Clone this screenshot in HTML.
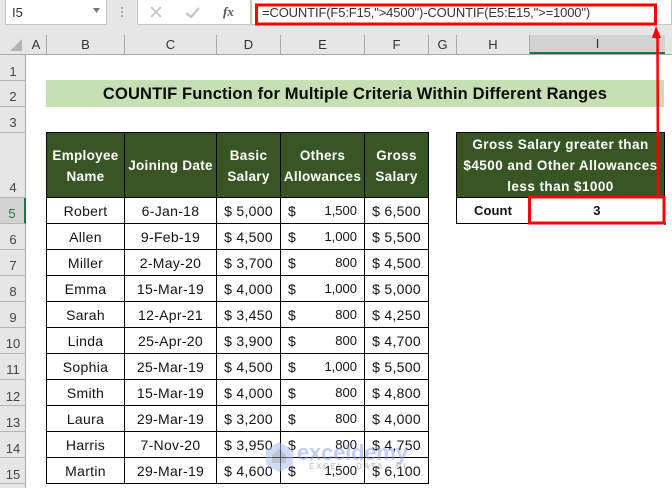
<!DOCTYPE html>
<html><head><meta charset="utf-8"><style>
html,body{margin:0;padding:0}
body{width:672px;height:488px;position:relative;overflow:hidden;background:#fff;font-family:"Liberation Sans",sans-serif;color:#111}
.a{position:absolute;white-space:nowrap}
.ch{position:absolute;top:35px;height:19px;line-height:19px;font-size:13px;text-align:center;color:#333;border-right:1px solid #a9a9a9;box-sizing:border-box}
.rh{position:absolute;left:0;width:26px;box-sizing:border-box;border-bottom:1px solid #b5b5b5;font-size:13px;text-align:center;color:#444;line-height:32px}
table{position:absolute;border-collapse:collapse;table-layout:fixed;font-size:14px;letter-spacing:.3px}
td{border:1px solid #000;padding:0;text-align:center;height:25px;white-space:nowrap;overflow:hidden}
th{border:1px solid #000;background:#375623;color:#fff;font-size:13.500px;line-height:21px;font-weight:bold;padding:1px 0 0;height:63px;letter-spacing:.3px;white-space:nowrap}
.o{position:relative}.o i{font-style:normal;position:absolute;left:7px;top:5px}.o b{font-weight:normal;position:absolute;right:7px;top:5px;font-size:13px;letter-spacing:0}
</style></head><body>
<div class="a" style="left:0;top:0;width:672px;height:54px;background:#e6e6e6"></div>
<div class="a" style="left:0;top:54px;width:26px;height:434px;background:#e6e6e6;border-right:1px solid #a9a9a9;box-sizing:border-box"></div>
<div class="a" style="left:5px;top:-1px;width:102px;height:26px;background:#fff;border:1px solid #c6c6c6;box-sizing:border-box"></div>
<div class="a" style="left:12px;top:5px;font-size:13px;color:#333">I5</div>
<svg class="a" style="left:92px;top:8px" width="10" height="6"><path d="M1 0H8L4.500 5Z" fill="#777"/></svg>
<div class="a" style="left:121px;top:7px;width:2px;height:2px;background:#aaa;box-shadow:0 4px #aaa,0 8px #aaa"></div>
<div class="a" style="left:137px;top:-1px;width:114px;height:26px;background:#fff;border:1px solid #c6c6c6;box-sizing:border-box"></div>
<svg class="a" style="left:148px;top:4px" width="90" height="16"><path d="M3 3L13 13M13 3L3 13" stroke="#c4c4c4" stroke-width="1.800" fill="none"/><path d="M38 9L43 13L51 4" stroke="#c4c4c4" stroke-width="2.200" fill="none"/></svg>
<div class="a" style="left:223px;top:4px;font:italic bold 13px 'Liberation Serif',serif;color:#555">fx</div>
<div class="a" style="left:251px;top:-1px;width:421px;height:26px;background:#fff;border:1px solid #c6c6c6;box-sizing:border-box"></div>
<div class="a" style="left:262px;top:5px;font-size:13px;color:#333;letter-spacing:-.14px">=COUNTIF(F5:F15,"&gt;4500")-COUNTIF(E5:E15,"&gt;=1000")</div>

<svg class="a" style="left:9px;top:38px" width="15" height="15"><path d="M13 1V13H1Z" fill="#b4b4b4"/></svg>
<div class="ch" style="left:26px;width:21px">A</div>
<div class="ch" style="left:47px;width:78px">B</div>
<div class="ch" style="left:125px;width:92px">C</div>
<div class="ch" style="left:217px;width:64px">D</div>
<div class="ch" style="left:281px;width:84px">E</div>
<div class="ch" style="left:365px;width:64px">F</div>
<div class="ch" style="left:429px;width:28px">G</div>
<div class="ch" style="left:457px;width:73px">H</div>
<div class="ch" style="left:530px;width:135px;background:#d2d2d2;border-bottom:2px solid #217346;border-right:none;line-height:18px">I</div>
<div class="a" style="left:0;top:54px;width:672px;height:1px;background:#a9a9a9"></div>
<div class="a" style="left:665px;top:35px;width:7px;height:19px;background:#e6e6e6"></div>

<div class="rh" style="top:54px;height:27px;line-height:35px">1</div>
<div class="rh" style="top:81px;height:26px">2</div>
<div class="rh" style="top:107px;height:26px">3</div>
<div class="rh" style="top:133px;height:65px;line-height:110px">4</div>
<div class="rh" style="top:198px;height:26px;background:#d2d2d2;color:#217346;border-right:2px solid #217346">5</div>
<div class="rh" style="top:224px;height:26px">6</div>
<div class="rh" style="top:250px;height:26px">7</div>
<div class="rh" style="top:276px;height:26px">8</div>
<div class="rh" style="top:302px;height:26px">9</div>
<div class="rh" style="top:328px;height:26px">10</div>
<div class="rh" style="top:354px;height:26px">11</div>
<div class="rh" style="top:380px;height:26px;line-height:33px">12</div>
<div class="rh" style="top:406px;height:26px;line-height:33px">13</div>
<div class="rh" style="top:432px;height:26px;line-height:33px">14</div>
<div class="rh" style="top:458px;height:26px;line-height:33px">15</div>
<div class="rh" style="top:484px;height:4px;border:none"></div>

<div class="a" style="left:46px;top:80px;width:618px;height:27px;background:#c6e0b4;text-align:center;font-weight:bold;font-size:16.500px;line-height:29px;color:#0a0a0a;letter-spacing:.15px">COUNTIF Function for Multiple Criteria Within Different Ranges</div>

<table style="left:46px;top:132px;width:383px">
<colgroup><col style="width:78px"><col style="width:92px"><col style="width:64px"><col style="width:84px"><col style="width:64px"></colgroup>
<tr><th>Employee<br>Name</th><th>Joining Date</th><th>Basic<br>Salary</th><th>Others<br>Allowances</th><th>Gross<br>Salary</th></tr>
<tr><td>Robert</td><td>6-Jan-18</td><td>$ 5,000</td><td class="o"><i>$</i><b>1,500</b></td><td>$ 6,500</td></tr>
<tr><td>Allen</td><td>9-Feb-19</td><td>$ 4,500</td><td class="o"><i>$</i><b>1,000</b></td><td>$ 5,500</td></tr>
<tr><td>Miller</td><td>2-May-20</td><td>$ 3,700</td><td class="o"><i>$</i><b>800</b></td><td>$ 4,500</td></tr>
<tr><td>Emma</td><td>15-Mar-19</td><td>$ 4,000</td><td class="o"><i>$</i><b>1,000</b></td><td>$ 5,000</td></tr>
<tr><td>Sarah</td><td>12-Apr-21</td><td>$ 3,450</td><td class="o"><i>$</i><b>800</b></td><td>$ 4,250</td></tr>
<tr><td>Linda</td><td>25-Apr-20</td><td>$ 3,900</td><td class="o"><i>$</i><b>800</b></td><td>$ 4,700</td></tr>
<tr><td>Sophia</td><td>25-Mar-19</td><td>$ 4,500</td><td class="o"><i>$</i><b>1,000</b></td><td>$ 5,500</td></tr>
<tr><td>Smith</td><td>15-Mar-19</td><td>$ 4,000</td><td class="o"><i>$</i><b>800</b></td><td>$ 4,800</td></tr>
<tr><td>Laura</td><td>29-Mar-19</td><td>$ 3,200</td><td class="o"><i>$</i><b>800</b></td><td>$ 4,000</td></tr>
<tr><td>Harris</td><td>7-Nov-20</td><td>$ 3,950</td><td class="o"><i>$</i><b>800</b></td><td>$ 4,750</td></tr>
<tr><td>Martin</td><td>29-Mar-19</td><td>$ 4,600</td><td class="o"><i>$</i><b>1,500</b></td><td>$ 6,100</td></tr>
</table>

<table style="left:456px;top:132px;width:208px">
<colgroup><col style="width:73px"><col style="width:135px"></colgroup>
<tr><th colspan="2" style="letter-spacing:.45px">Gross Salary greater than<br>$4500 and Other Allowances<br>less than $1000</th></tr>
<tr><td style="font-weight:bold;font-size:13px;letter-spacing:.1px">Count</td><td style="font-weight:bold;font-size:13px">3</td></tr>
</table>

<svg class="a" style="left:265px;top:441px;opacity:.55" width="30" height="32"><path d="M14 1L28 9V24L14 31L1 24V9Z" fill="#a9bdf0"/><path d="M14 8L21 14V22H7V14Z" fill="#8a94a8"/></svg>
<div class="a" style="left:297px;top:440px;font:bold 22px 'Liberation Sans',sans-serif;letter-spacing:-.2px;color:rgba(130,155,240,.5)">exceldemy</div>
<div class="a" style="left:309px;top:462px;font:bold 8px 'Liberation Sans',sans-serif;letter-spacing:1.700px;color:rgba(130,130,130,.42)">EXCEL · DATA · BI</div>

<svg class="a" style="left:0;top:0" width="672" height="488">
<rect x="256.500" y="5" width="399" height="19" fill="none" stroke="#f00" stroke-width="3"/>
<rect x="529.500" y="197" width="134.500" height="26" fill="none" stroke="#f00" stroke-width="3"/>
<path d="M658 196L657.500 34" stroke="#f00" stroke-width="2.500" fill="none"/>
<path d="M656 26L652 38H661Z" fill="#f00"/>
<rect x="664" y="222" width="2" height="3" fill="#217346"/>
</svg>
</body></html>
